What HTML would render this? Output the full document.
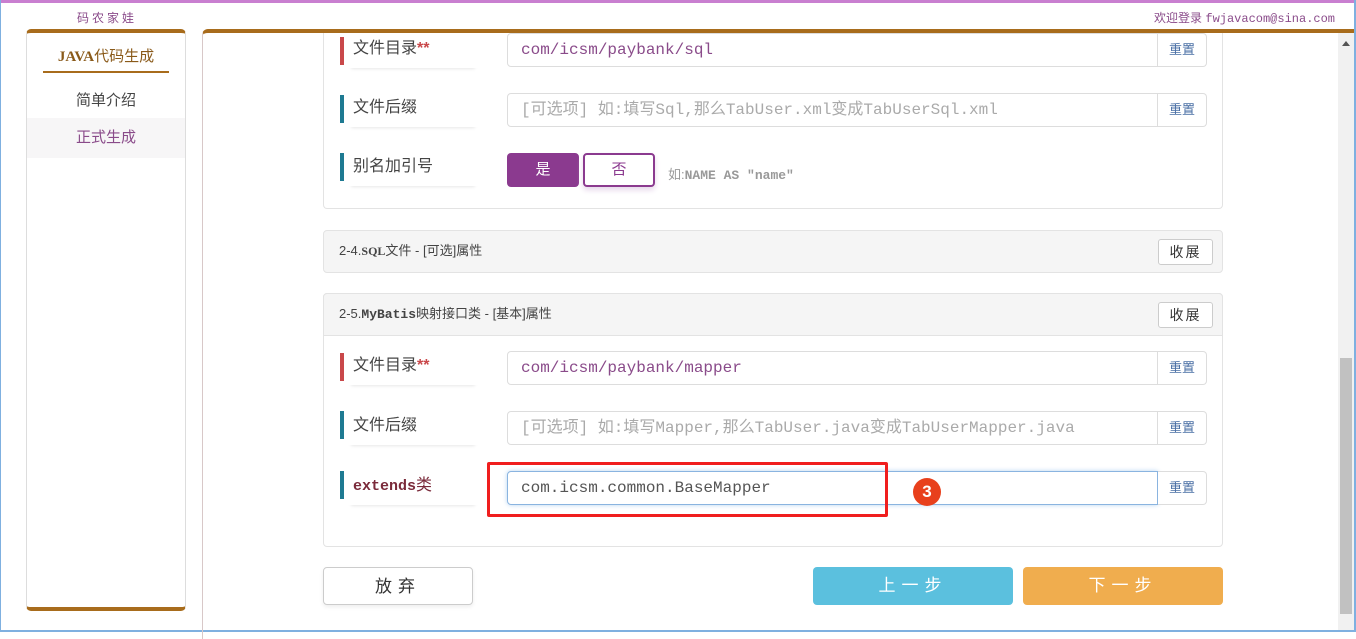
<!DOCTYPE html>
<html><head><meta charset="utf-8"><style>
*{box-sizing:border-box;margin:0;padding:0}
body{width:1356px;height:632px;overflow:hidden;background:#fff;font-family:"Liberation Sans","Noto Sans CJK SC",sans-serif;position:relative;color:#444}
.a{position:absolute}
.mono{font-family:"Liberation Mono","Noto Sans CJK SC",monospace}
.serif{font-family:"Liberation Serif","Noto Serif CJK SC",serif}
.bar{position:absolute;width:4px;height:28px}
.lbl{position:absolute;font-size:16px;color:#444;width:130px;height:34px;line-height:26px;box-shadow:0 4px 3px -3px #e8e8e8}
.inp{position:absolute;border:1px solid #ddd;border-radius:4px 0 0 4px;height:34px;font-size:16px;line-height:32px;padding:0 13px;color:#8a4b8a;background:#fff;white-space:nowrap;overflow:hidden}
.rst{position:absolute;border:1px solid #ddd;border-left:none;border-radius:0 4px 4px 0;height:34px;width:49px;font-size:13px;color:#4a6fa5;text-align:center;line-height:32px;background:#fff}
.ph{color:#aaa}
.phd{position:absolute;left:323px;width:900px;height:43px;background:#f5f5f5;border:1px solid #e3e3e3;border-radius:4px;font-size:13px;color:#444;padding:0 15px;line-height:40px}
.sz{position:absolute;right:9px;top:8px;width:55px;height:26px;border:1px solid #ccc;border-radius:3px;background:#fff;font-size:14px;text-align:center;line-height:24px;color:#333;letter-spacing:2px}
.btn{position:absolute;height:38px;border-radius:4px;font-size:17px;text-align:center;line-height:38px;letter-spacing:6px}
</style></head><body>
<div class="a" style="left:0;top:0;width:1356px;height:3px;background:#c97fd0"></div>
<div class="a" style="left:0;top:0;width:1px;height:632px;background:#7fb0e0"></div>
<div class="a" style="right:0;top:0;width:2px;height:632px;background:#7fb0e0"></div>
<div class="a" style="left:0;bottom:0;width:1356px;height:2px;background:#7fb0e0"></div>
<div class="a" style="left:77px;top:9px;font-size:12px;color:#8a4b8a;letter-spacing:3px">码农家娃</div>
<div class="a" style="right:21px;top:9px;font-size:12px;color:#8a4b8a">欢迎登录 <span class="mono">fwjavacom@sina.com</span></div>

<!-- sidebar -->
<div class="a" style="left:26px;top:29px;width:160px;height:582px;border:1px solid #ddd;border-top:4px solid #a86c1c;border-bottom:4px solid #a86c1c;border-radius:5px;background:#fff"></div>
<div class="a serif" style="left:43px;top:45px;width:126px;text-align:center;font-size:15px;color:#8a5a1a;font-weight:bold">JAVA<span style="font-weight:normal;font-family:'Noto Sans CJK SC',sans-serif">代码生成</span></div>
<div class="a" style="left:43px;top:71px;width:126px;height:2px;background:#a86c1c"></div>
<div class="a" style="left:27px;top:89px;width:158px;text-align:center;font-size:15px;color:#444">简单介绍</div>
<div class="a" style="left:27px;top:118px;width:158px;height:40px;background:#f7f6f7;text-align:center;font-size:15px;color:#8a4b8a;line-height:40px">正式生成</div>

<!-- main -->
<div class="a" style="left:202px;top:29px;width:1152px;height:610px;border-left:1px solid #d8c8c8;border-top:4px solid #a86c1c;border-radius:6px 0 0 0"></div>
<div class="a" style="left:1338px;top:33px;width:16px;height:597px;background:#f1f1f1"></div>
<div class="a" style="left:1340px;top:358px;width:12px;height:256px;background:#c1c1c1"></div>
<div class="a" style="left:1342px;top:41px;width:0;height:0;border:4px solid transparent;border-bottom:5px solid #555;border-top:none"></div>

<!-- panel 1 -->
<div class="a" style="left:323px;top:33px;width:900px;height:176px;border:1px solid #e3e3e3;border-top:none;border-radius:0 0 4px 4px"></div>
<div class="bar" style="left:340px;top:37px;background:#c9484a"></div>
<div class="lbl" style="left:348px;top:34px;padding:2px 5px">文件目录<span style="color:#c9484a;font-weight:bold">**</span></div>
<div class="inp mono" style="left:507px;top:33px;width:651px">com/icsm/paybank/sql</div>
<div class="rst" style="left:1158px;top:33px">重置</div>

<div class="bar" style="left:340px;top:95px;background:#1e7a92"></div>
<div class="lbl" style="left:348px;top:93px;padding:2px 5px">文件后缀</div>
<div class="inp mono ph" style="left:507px;top:93px;width:651px">[可选项]  如:填写Sql,那么TabUser.xml变成TabUserSql.xml</div>
<div class="rst" style="left:1158px;top:93px">重置</div>

<div class="bar" style="left:340px;top:153px;background:#1e7a92"></div>
<div class="lbl" style="left:348px;top:152px;padding:2px 5px">别名加引号</div>
<div class="btn" style="left:507px;top:153px;width:72px;height:34px;line-height:34px;background:#8b3a8f;color:#fff;font-size:15px;letter-spacing:0">是</div>
<div class="btn" style="left:583px;top:153px;width:72px;height:34px;line-height:30px;border:2px solid #8b3a8f;color:#8b3a8f;font-size:15px;letter-spacing:0;box-shadow:0 3px 6px #e6d6ea">否</div>
<div class="a" style="left:668px;top:164px;font-size:13px;color:#999">如:<span class="mono" style="font-weight:bold">NAME AS "name"</span></div>

<!-- 2-4 -->
<div class="phd" style="top:230px">2-4.<span class="serif" style="font-weight:bold;font-size:12px">SQL</span>文件 - [可选]属性<div class="sz">收展</div></div>

<!-- 2-5 -->
<div class="a" style="left:323px;top:293px;width:900px;height:254px;border:1px solid #e3e3e3;border-radius:4px"></div>
<div class="phd" style="top:293px;border-radius:4px 4px 0 0">2-5.<span class="mono" style="font-weight:bold">MyBatis</span>映射接口类 - [基本]属性<div class="sz">收展</div></div>

<div class="bar" style="left:340px;top:353px;background:#c9484a"></div>
<div class="lbl" style="left:348px;top:351px;padding:2px 5px">文件目录<span style="color:#c9484a;font-weight:bold">**</span></div>
<div class="inp mono" style="left:507px;top:351px;width:651px">com/icsm/paybank/mapper</div>
<div class="rst" style="left:1158px;top:351px">重置</div>

<div class="bar" style="left:340px;top:411px;background:#1e7a92"></div>
<div class="lbl" style="left:348px;top:411px;padding:2px 5px">文件后缀</div>
<div class="inp mono ph" style="left:507px;top:411px;width:651px">[可选项]  如:填写Mapper,那么TabUser.java变成TabUserMapper.java</div>
<div class="rst" style="left:1158px;top:411px">重置</div>

<div class="bar" style="left:340px;top:471px;background:#1e7a92"></div>
<div class="lbl" style="left:348px;top:471px;padding:2px 5px;color:#7a2a3a"><span class="mono" style="font-weight:bold;font-size:15px">extends</span>类</div>
<div class="inp mono" style="left:507px;top:471px;width:651px;border-color:#8ab4e0;box-shadow:0 0 5px #b8d4f0;color:#555">com.icsm.common.BaseMapper</div>
<div class="rst" style="left:1158px;top:471px">重置</div>
<div class="a" style="left:487px;top:462px;width:401px;height:55px;border:3px solid #f01e1e;border-radius:2px"></div>
<div class="a" style="left:913px;top:478px;width:28px;height:28px;border-radius:50%;background:#e8401c;color:#fff;font-weight:bold;font-size:17px;text-align:center;line-height:28px">3</div>

<!-- bottom buttons -->
<div class="btn" style="left:323px;top:567px;width:150px;border:1px solid #ccc;background:#fff;color:#333;box-shadow:0 2px 4px #eee">放弃</div>
<div class="btn" style="left:813px;top:567px;width:200px;background:#5bc0de;color:#fff">上一步</div>
<div class="btn" style="left:1023px;top:567px;width:200px;background:#f0ad4e;color:#fff">下一步</div>
</body></html>
